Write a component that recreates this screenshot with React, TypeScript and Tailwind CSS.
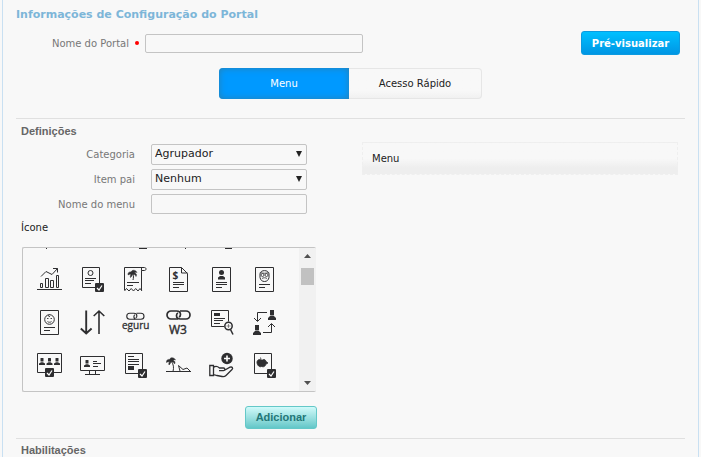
import clsx from "clsx";
import { useState } from "react";
import type { ReactNode } from "react";

function CheckBadge({ x, y }: { x: number; y: number }) {
	return (
		<g>
			<rect x={x} y={y} width="9" height="9" rx="1" fill="#2e2e30" stroke="none" />
			<path d={`M${x + 2} ${y + 5}l2 2 3-4.5`} stroke="#fff" strokeWidth="1.2" />
		</g>
	);
}

function Person({ x, y }: { x: number; y: number }) {
	return (
		<g fill="#2e2e30" stroke="none">
			<rect x={x - 1.5} y={y} width="3" height="3.5" rx="0.5" />
			<path d={`M${x - 3} ${y + 7}v-1.5l2-1.2h2l2 1.200v1.500z`} />
		</g>
	);
}

function Chain() {
	return (
		<g>
			<path d="M12 9H5a4 4 0 0 1 0-8h5.500c2.500 0 4 1.500 4 3.500 0 1.300-.7 2.200-1.500 2.500" />
			<path d="M14 1h6a4 4 0 0 1 0 8h-5.500c-2.500 0-4-1.500-4-3.500 0-1.300.7-2.200 1.500-2.500" />
		</g>
	);
}

function Palm() {
	return (
		<path
			d="M0 5c-.3-2.500 1.500-3.500 3-3C4-.5 7.500-.3 9 2.500 8 2 7 2.300 6.500 2.800 8.500 3.500 9 5 8 6.500 7.500 5 6.500 4.500 5 4.300 3.800 5 4 6.500 2.500 7.500c-.5-1.500 0-2.500.5-3.300C1.800 4 .8 4.300 0 5z"
			fill="#2e2e30"
			strokeWidth="0.5"
		/>
	);
}

const icons: { name: string; art: ReactNode }[] = [
	{
		name: "Gráfico",
		art: (
			<>
				<path d="M0 22.500h25M3.500 20.500v-4h2v4zM8.500 20.500v-9h3v9zM13.500 20.500v-7h3v7zM19.500 20.500v-12h2v12z" />
				<path d="M4 9.500 9 4.500l6 3 5.500-6M16 1.500h4.500v4" />
			</>
		),
	},
	{
		name: "Certificado aprovado",
		art: (
			<>
				<path d="M2.500.5h17v20h-17zM5 11.500h11M5 13.500h9M5 16.500h6" />
				<circle cx="10.500" cy="6" r="2.500" />
				<CheckBadge x={15} y={16} />
			</>
		),
	},
	{
		name: "Recibo de férias",
		art: (
			<>
				<path d="M1.500 23V.5h20c2 0 2 3 0 3h-3V.5M18.500 3.500V23M4 15.500h12M4 18.500h6" />
				<path d="m1.500 24 2-2.500 2.500 2.500 2.200-2.500 2.300 2.500 2.200-2.500 2.300 2.500 2-2.500 2 2.500" />
				<g transform="translate(5 3)">
					<Palm />
					<path d="M5 4c.7 2 .5 4 0 6" />
				</g>
			</>
		),
	},
	{
		name: "Recibo de pagamento",
		art: (
			<>
				<path d="M3.500.5h12l6 6v18h-18zM15.500.5v5.500h6M7 15.500h11M7 17.500h11M7 20.500h6" />
				<text x="6.500" y="12" fontSize="10" fontWeight="700" fill="#2e2e30" stroke="none">
					$
				</text>
			</>
		),
	},
	{
		name: "Ficha pessoal",
		art: (
			<>
				<path d="M3.500.5h18v24h-18zM7 15.500h11M7 17.500h11M7 20.500h6" />
				<circle cx="12.500" cy="5.500" r="2.500" fill="#2e2e30" stroke="none" />
				<path d="M9 12.500v-2l2-1.500h3l2 1.500v2z" fill="#2e2e30" stroke="none" />
			</>
		),
	},
	{
		name: "Aposentadoria",
		art: (
			<>
				<path d="M3.500.5h18v24h-18zM7 17.500h11M7 20.500h6" />
				<path d="M8 7c0-4.500 9-4.500 9 0v3.500c-.5 2.500-2 4-4.500 4S8.500 13 8 10.500z" />
				<path d="M8.500 5.500c2.500 1 5.500 1 8 0M10 11.500c1-1 4-1 5 0" strokeWidth="0.8" />
				<circle cx="10.500" cy="8" r="1.500" strokeWidth="0.8" />
				<circle cx="14.500" cy="8" r="1.500" strokeWidth="0.8" />
			</>
		),
	},
	{
		name: "Dependente",
		art: (
			<>
				<path d="M3.500.5h18v24h-18zM7 17.500h11M7 20.500h6" />
				<circle cx="12.500" cy="9.500" r="4.800" />
				<path d="M12.500 4.500c-2 1-1 2.500.5 2M10 8.500h1.500M13.500 8.500H15M10.500 11.500c1 1 3 1 4 0" strokeWidth="0.9" />
			</>
		),
	},
	{
		name: "Transferência",
		art: (
			<>
				<path d="M6.200.5v22.500M.8 18.500l5.400 5 5.400-5" strokeWidth="1.900" />
				<path d="M19 24V1.500M13.700 6 19 1l5.300 5" strokeWidth="1.600" />
			</>
		),
	},
	{
		name: "eguru",
		art: (
			<>
				<g transform="translate(3 2.500) scale(.75)" strokeWidth="1.500">
					<Chain />
				</g>
				<text x="-1" y="19" fontSize="10" fill="#2e2e30" strokeWidth="0.3">
					eguru
				</text>
			</>
		),
	},
	{
		name: "W3",
		art: (
			<>
				<g strokeWidth="1.700">
					<Chain />
				</g>
				<text x="3" y="24" fontSize="12" fill="#2e2e30" strokeWidth="0.4">
					W3
				</text>
			</>
		),
	},
	{
		name: "Consulta de ficha",
		art: (
			<>
				<path d="M15 16.500H2.500V.5h17v11M5 8.500h11M5 10.500h9M5 13.500h6" />
				<path d="M5 3h6v3H5z" fill="#2e2e30" stroke="none" />
				<circle cx="19.500" cy="16" r="3.700" strokeWidth="1.500" />
				<path d="M17.500 16h4M19.500 14v4" strokeWidth="0.5" />
				<path d="M21.500 19.500l2.500 5" strokeWidth="1.500" />
			</>
		),
	},
	{
		name: "Substituição",
		art: (
			<>
				<path d="M15 2.500H5.500v8.500M2 8l3.500 3.500L9 8M11 22.500h8.500V14M16 17l3.500-3.500L23 17" />
				<g fill="#2e2e30" stroke="none">
					<path d="M18 0h4v5h-4zM16 10V8l2.500-2.500h3L24 8v2z" />
					<path d="M3 15h4v5H3zM1 25v-2l2.500-2.500h3L9 23v2z" />
				</g>
			</>
		),
	},
	{
		name: "Equipe aprovada",
		art: (
			<>
				<path d="M.5.5h24v19H.5z" />
				<Person x={5} y={5} />
				<Person x={12.5} y={5} />
				<Person x={20} y={5} />
				<CheckBadge x={8} y={15} />
			</>
		),
	},
	{
		name: "Portal do colaborador",
		art: (
			<>
				<path d="M.5 3.500h24v14H.5zM9.500 17.500v4M15.500 17.500v4M5 21.500h15M13 8.500h4M13 10.500h8M13 13.500h5" />
				<Person x={7} y={7} />
			</>
		),
	},
	{
		name: "Relatório aprovado",
		art: (
			<>
				<path d="M2.500.5h17v20h-17zM5 3.500h6M5 6.500h11M5 8.500h11M5 11.500h11" />
				<path d="M5 13h6v4H5z" fill="#2e2e30" stroke="none" />
				<CheckBadge x={15} y={16} />
			</>
		),
	},
	{
		name: "Férias",
		art: (
			<>
				<path d="M0 18.500h25M14 18l-1.500-5.500 4.500 4 4-1.500 3 3" />
				<g transform="translate(.5 4.500)">
					<Palm />
					<path d="M5 4c2 3 2.500 6 1.500 10" />
				</g>
			</>
		),
	},
	{
		name: "Benefícios",
		art: (
			<>
				<circle cx="18" cy="5.500" r="5.700" fill="#2e2e30" stroke="none" />
				<path d="M18 2.500v6M15 5.500h6" stroke="#fff" strokeWidth="1.600" />
				<path
					d="M.8 12.500h3.700v10H.8zM4.500 14.500c2-1.800 4-1.300 6 .5h4c1.800 0 1.800 2.700 0 2.700H10M15.500 17.200l5.500-3c2-.7 3.500.8 2 2.300l-6 6c-1 1-2.500 1.300-4 1L8 22.500l-3.500-1"
					strokeWidth="1.300"
				/>
			</>
		),
	},
	{
		name: "Alimentação aprovada",
		art: (
			<>
				<path d="M2.500.5h17v20h-17z" />
				<path
					d="M9.500 7C7 5.500 4.500 7.500 5 10c.5 2.500 2.500 4.500 4.500 3.500 2.500 1 4-.5 4.500-2.500l2-1-2-1.500C13.500 6.500 12 6 10.500 7zM9 6.500l-.5-2"
					fill="#2e2e30"
					strokeWidth="0.800"
				/>
				<CheckBadge x={15} y={16} />
			</>
		),
	},
];

function IconGrid() {
	const [selected, setSelected] = useState("");

	return (
		<div className="flex h-[145px] w-[294px] overflow-hidden rounded-xs border border-[#c4c4c4] border-r-0">
			<div className="flex-1 pl-[5px]">
				{/* tail of the row that is scrolled out */}
				<svg className="block h-[11px] w-full" fill="#2e2e30" aria-hidden="true">
					<path d="M18 0h1v1h-1zM111 0h8v1h-8zM157 0h1v1h-1zM197 0h7v1h-7z" />
				</svg>
				<div className="grid grid-cols-[repeat(6,43px)]">
					{icons.map((icon) => (
						<button
							key={icon.name}
							type="button"
							aria-label={icon.name}
							aria-pressed={selected === icon.name}
							onClick={() => setSelected(icon.name)}
							className={clsx(
								"flex h-[43px] items-start pt-2 pl-[9px]",
								selected === icon.name && "bg-[#e2f2fb]",
							)}
						>
							<svg
								className="size-[26px] overflow-visible font-['Open_Sans',sans-serif]"
								viewBox="0 0 26 26"
								fill="none"
								stroke="#2e2e30"
							>
								{icon.art}
							</svg>
						</button>
					))}
				</div>
			</div>
			<div className="flex w-[17px] flex-col items-center bg-[#f1f1f1] py-[6px]">
				<button type="button" aria-label="Rolar para cima">
					<svg className="block h-[4px] w-[7px]" viewBox="0 0 7 4" fill="#505050">
						<path d="M3.500 0 7 4H0z" />
					</svg>
				</button>
				<div className="mt-[10px] h-[17px] w-[13px] bg-[#c1c1c1]" />
				<button type="button" aria-label="Rolar para baixo" className="mt-auto">
					<svg className="block h-[4px] w-[7px]" viewBox="0 0 7 4" fill="#505050">
						<path d="M0 0h7L3.500 4z" />
					</svg>
				</button>
			</div>
		</div>
	);
}

function SelectField({ id, label, options }: { id: string; label: string; options: string[] }) {
	return (
		<div className="flex h-[21px] items-center gap-4">
			<label htmlFor={id} className="w-[114px] text-right text-[10px] text-[#777]">
				{label}
			</label>
			<div className="relative w-[156px]">
				<select
					id={id}
					className="block h-[21px] w-full appearance-none rounded-xs border border-[#c4c4c4] bg-[#f8f8f8] px-[3px] text-[11px] text-[#222]"
				>
					{options.map((option) => (
						<option key={option}>{option}</option>
					))}
				</select>
				<svg
					className="pointer-events-none absolute top-[7px] right-[5px] h-[6px] w-[6px]"
					viewBox="0 0 6 6"
					fill="#222"
				>
					<path d="M0 0h6L3 6z" />
				</svg>
			</div>
		</div>
	);
}

export default function App() {
	const [tab, setTab] = useState("menu");

	return (
		<div className="bg-[#f8f8f8] px-[2px] font-['DejaVu_Sans',sans-serif] text-[10px] text-[#222]">
			<main className="min-h-screen border-x border-[#c9e0f2] px-[13px] pt-2">
				<h1 className="text-[11px] leading-[14px] font-bold text-[#7db6d8]">
					Informações de Configuração do Portal
				</h1>

				<div className="mt-[9px] flex h-6 items-center justify-between pr-[5px]">
					<div className="flex items-center">
						<label htmlFor="portal" className="w-[113px] text-right text-[#777]">
							Nome do Portal
						</label>
						<span className="mx-[6px] size-[4px] rounded-full bg-[#f00]" aria-hidden="true" />
						<input
							id="portal"
							type="text"
							required
							className="h-[19px] w-[218px] rounded-xs border border-[#c4c4c4] px-1"
						/>
					</div>
					<button
						type="button"
						className="h-6 w-[99px] rounded-[3px] border border-[#0c9be0] bg-linear-to-b from-[#00c0ff] to-[#0096e4] font-bold text-white"
					>
						Pré-visualizar
					</button>
				</div>

				<div className="mx-auto mt-[13px] flex h-[31px] w-[263px]">
					<button
						type="button"
						onClick={() => setTab("menu")}
						className={clsx(
							"w-[130px] rounded-l-[4px]",
							tab === "menu"
								? "bg-[#0099ff] text-white shadow-[inset_0_0_7px_#2a7fae]"
								: "border border-r-0 border-[#e6e6e6] bg-linear-to-b from-[#f8f8f8] from-75% to-[#f1f1f1]",
						)}
					>
						Menu
					</button>
					<button
						type="button"
						onClick={() => setTab("acesso")}
						className={clsx(
							"flex-1 rounded-r-[4px]",
							tab === "acesso"
								? "bg-[#0099ff] text-white shadow-[inset_0_0_7px_#2a7fae]"
								: "border border-l-0 border-[#e6e6e6] bg-linear-to-b from-[#f8f8f8] from-75% to-[#f1f1f1]",
						)}
					>
						Acesso Rápido
					</button>
				</div>

				<section className="mt-[19px] border-t border-[#e0e0e0] px-[5px] pt-[5px]">
					<h2 className="font-['Liberation_Sans',sans-serif] text-[11px] leading-[15px] font-bold text-[#666]">
						Definições
					</h2>
					<div className="flex gap-[55px]">
						<div className="w-[286px] shrink-0 pt-[5px]">
							<div className="flex flex-col gap-1">
								<SelectField id="categoria" label="Categoria" options={["Agrupador", "Link"]} />
								<SelectField id="pai" label="Item pai" options={["Nenhum"]} />
								<div className="flex h-5 items-center gap-4">
									<label htmlFor="nome" className="w-[114px] text-right text-[#777]">
										Nome do menu
									</label>
									<input
										id="nome"
										type="text"
										className="h-5 w-[156px] rounded-xs border border-[#c4c4c4] px-1"
									/>
								</div>
							</div>
							<h3 className="mt-[6px] leading-[15px]">Ícone</h3>
						</div>
						<div className="mt-[3px] mr-[2px] flex h-[33px] flex-1 items-center border border-dashed border-[#efefef] bg-linear-to-b from-[#f8f8f8] from-50% to-[#eeeeee] to-80% px-[9px]">
							Menu
						</div>
					</div>
					<div className="mt-3 ml-px flex w-[295px] flex-col gap-[14px]">
						<IconGrid />
						<button
							type="button"
							className="h-[23px] w-[72px] self-end rounded-[3px] border border-[#64c8c8] bg-linear-to-b from-[#d0fafa] to-[#62c7c8] font-['Liberation_Sans',sans-serif] text-[11px] font-bold text-[#237777]"
						>
							Adicionar
						</button>
					</div>
				</section>

				<section className="mt-[9px] border-t border-[#e0e0e0] px-[5px] pt-[5px]">
					<h2 className="font-['Liberation_Sans',sans-serif] text-[11px] leading-[13px] font-bold text-[#666]">
						Habilitações
					</h2>
				</section>
			</main>
		</div>
	);
}
